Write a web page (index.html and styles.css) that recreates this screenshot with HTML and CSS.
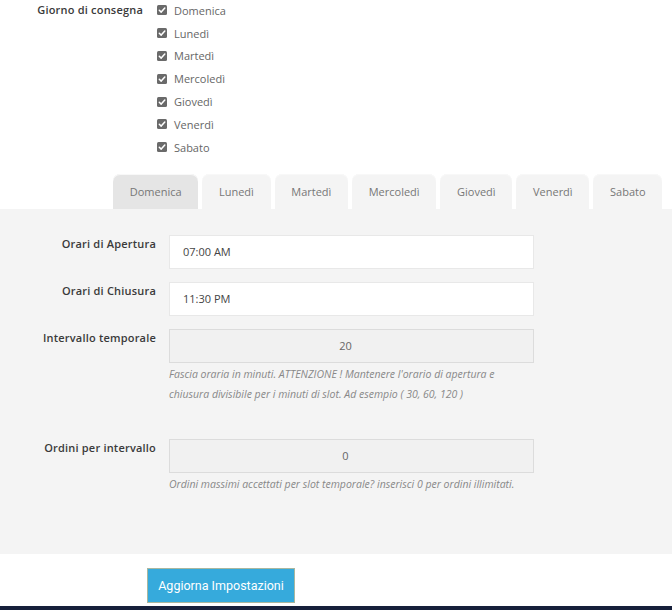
FILE: index.html
```html
<!DOCTYPE html>
<html lang="it">
<head>
<meta charset="utf-8">
<title>Impostazioni consegna</title>
<link rel="stylesheet" href="styles.css">
</head>
<body>
<div class="days">
  <div class="days-label">Giorno di consegna</div>
  <ul class="days-list">
    <li><svg class="cb" viewBox="0 0 10 10"><rect width="10" height="10" rx="1.5"/><path d="M2.3 5.2 4.2 7.1 7.8 3"/></svg>Domenica</li>
    <li><svg class="cb" viewBox="0 0 10 10"><rect width="10" height="10" rx="1.5"/><path d="M2.3 5.2 4.2 7.1 7.8 3"/></svg>Lunedì</li>
    <li><svg class="cb" viewBox="0 0 10 10"><rect width="10" height="10" rx="1.5"/><path d="M2.3 5.2 4.2 7.1 7.8 3"/></svg>Martedì</li>
    <li><svg class="cb" viewBox="0 0 10 10"><rect width="10" height="10" rx="1.5"/><path d="M2.3 5.2 4.2 7.1 7.8 3"/></svg>Mercoledì</li>
    <li><svg class="cb" viewBox="0 0 10 10"><rect width="10" height="10" rx="1.5"/><path d="M2.3 5.2 4.2 7.1 7.8 3"/></svg>Giovedì</li>
    <li><svg class="cb" viewBox="0 0 10 10"><rect width="10" height="10" rx="1.5"/><path d="M2.3 5.2 4.2 7.1 7.8 3"/></svg>Venerdì</li>
    <li><svg class="cb" viewBox="0 0 10 10"><rect width="10" height="10" rx="1.5"/><path d="M2.3 5.2 4.2 7.1 7.8 3"/></svg>Sabato</li>
  </ul>
</div>

<div class="tabs">
  <div class="tab active">Domenica</div>
  <div class="tab">Lunedì</div>
  <div class="tab">Martedì</div>
  <div class="tab">Mercoledì</div>
  <div class="tab">Giovedì</div>
  <div class="tab">Venerdì</div>
  <div class="tab">Sabato</div>
</div>

<div class="panel">
  <div class="row">
    <div class="label">Orari di Apertura</div>
    <div class="field"><div class="input">07:00 AM</div></div>
  </div>
  <div class="row">
    <div class="label">Orari di Chiusura</div>
    <div class="field"><div class="input">11:30 PM</div></div>
  </div>
  <div class="row">
    <div class="label">Intervallo temporale</div>
    <div class="field">
      <div class="input disabled">20</div>
      <p class="help">Fascia oraria in minuti. ATTENZIONE ! Mantenere l'orario di apertura e chiusura divisibile per i minuti di slot. Ad esempio ( 30, 60, 120 )</p>
    </div>
  </div>
  <div class="row row-gap">
    <div class="label">Ordini per intervallo</div>
    <div class="field">
      <div class="input disabled">0</div>
      <p class="help">Ordini massimi accettati per slot temporale? inserisci 0 per ordini illimitati.</p>
    </div>
  </div>
</div>

<div class="actions">
  <button class="btn" type="button">Aggiorna Impostazioni</button>
</div>
<div class="footer"></div>
</body>
</html>
```
FILE: styles.css
```css
html, body {
  margin: 0;
  padding: 0;
  background: #ffffff;
}
body {
  font-family: "Open Sans", "DejaVu Sans", sans-serif;
  font-size: 11px;
  color: #555;
  width: 672px;
  height: 610px;
  overflow: hidden;
  display: flex;
  flex-direction: column;
}

/* Days checkboxes */
.days {
  display: grid;
  grid-template-columns: 143px auto;
  column-gap: 14px;
  margin-top: -1px;
}
.days-label {
  text-align: right;
  font-weight: 600;
  color: #3a3a3a;
  letter-spacing: 0.2px;
  line-height: 22.8px;
}
.days-list {
  list-style: none;
  margin: 0;
  padding: 0;
}
.days-list li {
  display: flex;
  align-items: center;
  gap: 7px;
  height: 22.8px;
  color: #666;
}
.cb {
  width: 10px;
  height: 10px;
  flex: none;
}
.cb rect { fill: #6a6a6a; }
.cb path {
  fill: none;
  stroke: #fff;
  stroke-width: 1.5;
  stroke-linecap: round;
  stroke-linejoin: round;
}

/* Tabs */
.tabs {
  display: flex;
  gap: 4px;
  padding-left: 113px;
  margin-top: 15px;
}
.tab {
  height: 35px;
  padding: 0 16.7px;
  display: flex;
  align-items: center;
  background: #f4f4f4;
  border-radius: 7px 7px 0 0;
  color: #777;
  box-shadow: inset 0 1px 0 #f8f8f8;
}
.tab.active {
  background: #e5e5e5;
}

/* Panel */
.panel {
  background: #f4f4f4;
  padding: 26px 0 0;
  height: 345px;
  box-sizing: border-box;
}
.row {
  display: grid;
  grid-template-columns: 156px 365px;
  column-gap: 13px;
  margin-bottom: 13px;
}
.row-gap {
  margin-top: 35px;
}
.label {
  text-align: right;
  font-weight: 600;
  color: #3a3a3a;
  letter-spacing: 0.2px;
  padding-top: 1px;
  line-height: 16px;
}
.input {
  height: 34px;
  box-sizing: border-box;
  background: #fff;
  border: 1px solid #e8e8e8;
  padding: 0 13px;
  display: flex;
  align-items: center;
  color: #444;
}
.input.disabled {
  background: #f1f1f1;
  border-color: #dcdcdc;
  justify-content: center;
  padding: 0 25px 0 13px;
  color: #666;
}
.help {
  margin: 0;
  padding-top: 1px;
  font-size: 10.5px;
  font-style: italic;
  line-height: 20px;
  color: #888;
}

/* Button */
.actions {
  padding: 14px 0 0 147px;
  flex: 1;
}
.btn {
  width: 148px;
  height: 35px;
  background: #36aadc;
  border: 1px solid #a9b79f;
  color: #fff;
  font-family: "Roboto", "Liberation Sans", sans-serif;
  font-size: 12.5px;
  padding: 0;
  cursor: pointer;
}
.footer {
  height: 4px;
  background: #161f3a;
}
```
